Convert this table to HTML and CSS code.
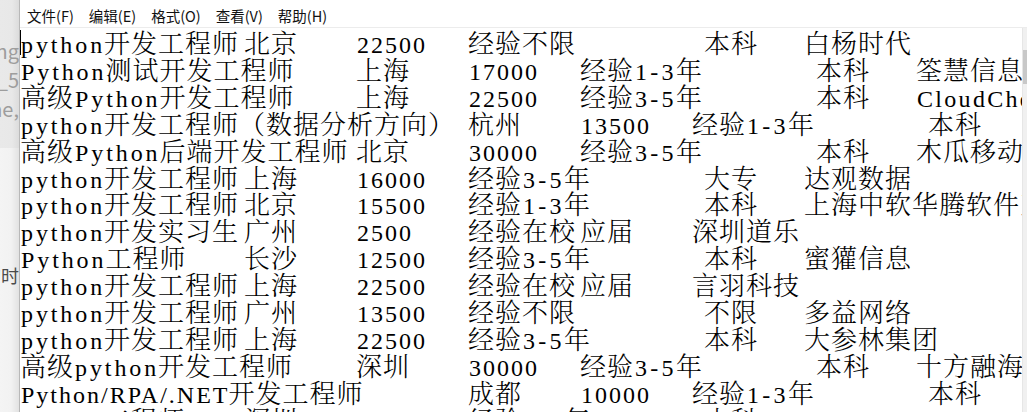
FILE: index.html
```html
<!DOCTYPE html>
<html lang="zh-CN">
<head>
<meta charset="utf-8">
<title>Notepad</title>
<link rel="stylesheet" href="styles.css">
</head>
<body>
<div class="desk">
  <div class="desk-top">
    <div class="bgline">String</div>
    <div class="bgline">data_5</div>
    <div class="bgline">one,</div>
  </div>
  <div class="desk-bottom">
    <div class="bgline dark">的时</div>
  </div>
</div>
<div class="win">
  <div class="menu">
    <span class="mi">文件(F)</span>
    <span class="mi">编辑(E)</span>
    <span class="mi">格式(O)</span>
    <span class="mi">查看(V)</span>
    <span class="mi">帮助(H)</span>
  </div>
  <div class="body">
    <div class="text">
      <div class="row first"><span class="caret"></span><span class="f w2"><span class="a">python</span>开发工程师</span><span class="f w1">北京</span><span class="f w1"><span class="d">22500</span></span><span class="f w2">经验不限</span><span class="f w1 ed">本科</span><span class="f">白杨时代</span></div>
      <div class="row"><span class="f w3"><span class="a">Python</span>测试开发工程师</span><span class="f w1">上海</span><span class="f w1"><span class="d">17000</span></span><span class="f w2">经验<span class="r">1-3</span>年</span><span class="f w1 ed">本科</span><span class="f">筌慧信息</span></div>
      <div class="row"><span class="f w3">高级<span class="a">Python</span>开发工程师</span><span class="f w1">上海</span><span class="f w1"><span class="d">22500</span></span><span class="f w2">经验<span class="r">3-5</span>年</span><span class="f w1 ed">本科</span><span class="f"><span class="c">CloudChef</span></span></div>
      <div class="row"><span class="f w4"><span class="a">python</span>开发工程师（数据分析方向）</span><span class="f w1">杭州</span><span class="f w1"><span class="d">13500</span></span><span class="f w2">经验<span class="r">1-3</span>年</span><span class="f w1 ed">本科</span></div>
      <div class="row"><span class="f w3">高级<span class="a">Python</span>后端开发工程师</span><span class="f w1">北京</span><span class="f w1"><span class="d">30000</span></span><span class="f w2">经验<span class="r">3-5</span>年</span><span class="f w1 ed">本科</span><span class="f">木瓜移动</span></div>
      <div class="row"><span class="f w2"><span class="a">python</span>开发工程师</span><span class="f w1">上海</span><span class="f w1"><span class="d">16000</span></span><span class="f w2">经验<span class="r">3-5</span>年</span><span class="f w1 ed">大专</span><span class="f">达观数据</span></div>
      <div class="row"><span class="f w2"><span class="a">python</span>开发工程师</span><span class="f w1">北京</span><span class="f w1"><span class="d">15500</span></span><span class="f w2">经验<span class="r">1-3</span>年</span><span class="f w1 ed">本科</span><span class="f">上海中软华腾软件系统有限公司</span></div>
      <div class="row"><span class="f w2"><span class="a">python</span>开发实习生</span><span class="f w1">广州</span><span class="f w1"><span class="d">2500</span></span><span class="f w1">经验在校</span><span class="f w1">应届</span><span class="f">深圳道乐</span></div>
      <div class="row"><span class="f w2"><span class="a">Python</span>工程师</span><span class="f w1">长沙</span><span class="f w1"><span class="d">12500</span></span><span class="f w2">经验<span class="r">3-5</span>年</span><span class="f w1 ed">本科</span><span class="f">蜜獾信息</span></div>
      <div class="row"><span class="f w2"><span class="a">python</span>开发工程师</span><span class="f w1">上海</span><span class="f w1"><span class="d">22500</span></span><span class="f w1">经验在校</span><span class="f w1">应届</span><span class="f">言羽科技</span></div>
      <div class="row"><span class="f w2"><span class="a">python</span>开发工程师</span><span class="f w1">广州</span><span class="f w1"><span class="d">13500</span></span><span class="f w2">经验不限</span><span class="f w1 ed">不限</span><span class="f">多益网络</span></div>
      <div class="row"><span class="f w2"><span class="a">python</span>开发工程师</span><span class="f w1">上海</span><span class="f w1"><span class="d">22500</span></span><span class="f w2">经验<span class="r">3-5</span>年</span><span class="f w1 ed">本科</span><span class="f">大参林集团</span></div>
      <div class="row"><span class="f w3">高级<span class="a">python</span>开发工程师</span><span class="f w1">深圳</span><span class="f w1"><span class="d">30000</span></span><span class="f w2">经验<span class="r">3-5</span>年</span><span class="f w1 ed">本科</span><span class="f">十方融海</span></div>
      <div class="row"><span class="f w4"><span class="d">Python/RPA/.NET</span>开发工程师</span><span class="f w1">成都</span><span class="f w1"><span class="d">10000</span></span><span class="f w2">经验<span class="r">1-3</span>年</span><span class="f w1 ed">本科</span></div>
      <div class="row"><span class="f w2"><span class="a">python</span>工程师</span><span class="f w1">深圳</span><span class="f w1"><span class="d">15000</span></span><span class="f w2">经验<span class="r">1-3</span>年</span><span class="f w1 ed">本科</span></div>
    </div>
    <div class="scroll"><div class="thumb"></div></div>
  </div>
</div>
</body>
</html>
```

FILE: styles.css
```css
html, body {
  margin: 0;
  padding: 0;
}
body {
  width: 1027px;
  height: 412px;
  overflow: hidden;
  display: flex;
  background: #ffffff;
}

/* background desktop strip on the left */
.desk {
  flex: none;
  width: 19px;
  display: flex;
  flex-direction: column;
  overflow: hidden;
  background: linear-gradient(to right, #f4f4f4 0, #f2f2f2 11px, #e2e2e2 19px);
}
.desk-top {
  height: 148px;
  padding-top: 36px;
  box-sizing: border-box;
  background: linear-gradient(to right, #e9e9e9 0, #e8e8e8 12px, #dcdcdc 19px);
}
.desk-bottom {
  padding-top: 113px;
}
.bgline {
  display: flex;
  justify-content: flex-end;
  white-space: nowrap;
  font-family: "Noto Sans CJK SC", "Noto Sans", sans-serif;
  font-size: 20px;
  line-height: 29px;
  color: #9d9d9d;
}
.bgline.dark {
  color: #4a4a4a;
  font-size: 18px;
}

/* notepad window */
.win {
  flex: 1;
  min-width: 0;
  display: flex;
  flex-direction: column;
  border-left: 1px solid #b8b8b8;
  background: #ffffff;
}
.menu {
  flex: none;
  height: 28px;
  box-sizing: border-box;
  padding-top: 3px;
  border-bottom: 1px solid #ececec;
  display: flex;
  align-items: center;
  font-family: "Noto Sans CJK SC", "Noto Sans", sans-serif;
  font-size: 14.5px;
  color: #111;
}
.mi {
  padding: 0 7px;
  margin-right: 1px;
}
.body {
  flex: 1;
  display: flex;
  min-height: 0;
}
.text {
  flex: 1;
  min-width: 0;
  overflow: hidden;
  padding-top: 0;
  font-family: "Noto Serif CJK SC", "Noto Sans CJK SC", serif;
  font-size: 26px;
  font-weight: 300;
  letter-spacing: 1px;
  color: #000;
}
.row {
  display: flex;
  height: 26.92px;
  line-height: 27px;
  white-space: nowrap;
}
.row.first {
  position: relative;
}
.caret {
  position: absolute;
  left: 0;
  top: 2px;
  width: 1px;
  height: 25px;
  background: #000;
}
.f {
  flex: none;
  box-sizing: border-box;
}
.w1 { width: 112px; }
.w2 { width: 224px; }
.w3 { width: 336px; }
.w4 { width: 448px; }
.ed { padding-left: 12px; }

/* half-width latin runs: serif glyphs spaced to a 14px cell */
.a, .d, .r, .c {
  font-family: "Liberation Serif", "DejaVu Serif", serif;
  font-size: 24px;
  font-weight: 400;
  padding-left: 1px;
  margin-right: -1px;
}
.a { letter-spacing: 2.9px; }
.d { letter-spacing: 2px; }
.r { letter-spacing: 3.3px; }
.c { letter-spacing: 2.3px; }

/* scrollbar sliver at the right edge */
.scroll {
  flex: none;
  width: 4px;
  background: #f0f0f0;
  border-left: 1px solid #e6e6e6;
  padding-top: 22px;
}
.thumb {
  height: 34px;
  background: #c8c8c8;
}
```
